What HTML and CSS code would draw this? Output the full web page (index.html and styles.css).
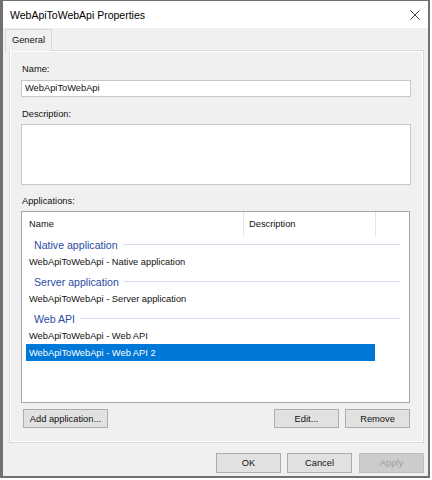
FILE: index.html
```html
<!DOCTYPE html>
<html>
<head>
<meta charset="utf-8">
<link rel="stylesheet" href="styles.css">
</head>
<body>
<div class="window">
  <div class="titlebar">
    <span class="title">WebApiToWebApi Properties</span>
    <svg class="close" width="10" height="10" viewBox="0 0 10 10"><path d="M0.5 0.5 L9.5 9.5 M9.5 0.5 L0.5 9.5" stroke="#404040" stroke-width="1" fill="none"/></svg>
  </div>
  <div class="tabs"><div class="tab">General</div></div>
  <div class="panel">
    <div class="label">Name:</div>
    <div class="input">WebApiToWebApi</div>
    <div class="label gap11">Description:</div>
    <div class="textarea"></div>
    <div class="label gap10">Applications:</div>
    <div class="listview">
      <div class="lv-header">
        <div class="col col-name">Name</div>
        <div class="col col-desc">Description</div>
      </div>
      <div class="group first">Native application</div>
      <div class="item">WebApiToWebApi - Native application</div>
      <div class="group">Server application</div>
      <div class="item">WebApiToWebApi - Server application</div>
      <div class="group">Web API</div>
      <div class="item">WebApiToWebApi - Web API</div>
      <div class="item selected">WebApiToWebApi - Web API 2</div>
    </div>
    <div class="panel-buttons">
      <button class="btn btn-add">Add application...</button>
      <div class="right-buttons">
        <button class="btn">Edit...</button>
        <button class="btn">Remove</button>
      </div>
    </div>
  </div>
  <div class="footer">
    <button class="btn btn-foot">OK</button>
    <button class="btn btn-foot">Cancel</button>
    <button class="btn btn-foot disabled">Apply</button>
  </div>
</div>
</body>
</html>
```
FILE: styles.css
```css
* { box-sizing: border-box; }
html, body { margin: 0; padding: 0; background: #ffffff; }
body {
  font-family: "Liberation Sans", Arial, sans-serif;
  font-size: 9.3px;
  color: #111;
}
.window {
  width: 430px;
  height: 478px;
  border-style: solid;
  border-color: #707070;
  border-width: 1px 2px 2px 3px;
  background: #f0f0f0;
  display: flex;
  flex-direction: column;
}
.titlebar {
  height: 27px;
  flex: none;
  background: #ffffff;
  display: flex;
  align-items: center;
  justify-content: space-between;
  padding: 0 8px 0 7px;
}
.title { font-size: 10.5px; color: #000; }
.close { display: block; }
.tabs {
  height: 23px;
  flex: none;
  display: flex;
  align-items: flex-end;
  padding-left: 2px;
  margin-bottom: -1px;
  position: relative;
  z-index: 1;
}
.tab {
  width: 47px;
  height: 22px;
  border: 1px solid #d9d9d9;
  border-bottom: none;
  background: #f0f0f0;
  display: flex;
  align-items: center;
  justify-content: center;
  padding-bottom: 1px;
}
.panel {
  height: 393px;
  flex: none;
  margin: 0 4px 0 6px;
  border: 1px solid #d9d9d9;
  box-shadow: inset 1px 1px 0 #ffffff, inset -1px -1px 0 #ffffff;
  background: #f0f0f0;
  padding: 12px 12px 0 11px;
  display: flex;
  flex-direction: column;
}
.label {
  height: 12px;
  line-height: 12px;
  margin-bottom: 5px;
  padding-left: 1px;
}
.label.gap11 { margin-top: 11px; margin-bottom: 4px; }
.label.gap10 { margin-top: 10px; margin-bottom: 4px; }
.input {
  height: 17px;
  border: 1px solid #c8c8c8;
  background: #fff;
  line-height: 15px;
  padding-left: 3px;
}
.textarea {
  height: 61px;
  border: 1px solid #c8c8c8;
  background: #fff;
}
.listview {
  height: 192px;
  margin-right: 1px;
  border: 1px solid #a5a5a5;
  background: #fff;
}
.lv-header {
  height: 24px;
  display: flex;
}
.col {
  height: 24px;
  line-height: 24px;
}
.col-name {
  width: 222px;
  padding-left: 7px;
  border-right: 1px solid #e5e5e5;
}
.col-desc {
  width: 132px;
  padding-left: 5px;
  border-right: 1px solid #e5e5e5;
}
.group {
  height: 17px;
  margin-top: 3px;
  display: flex;
  align-items: center;
  padding: 0 9px 0 12px;
  color: #2c4ba3;
  font-size: 10.6px;
}
.group.first { margin-top: 0; }
.group::after {
  content: "";
  flex: 1;
  height: 1px;
  background: #d3ddeb;
  margin-left: 5px;
}
.item {
  height: 17px;
  line-height: 17px;
  padding: 1px 0 0 7px;
}
.item.selected {
  margin-left: 4px;
  width: 349px;
  padding-left: 3px;
  background: #0078d7;
  color: #fff;
}
.panel-buttons {
  margin-top: 6px;
  display: flex;
  padding-left: 2px;
}
.right-buttons {
  margin-left: auto;
  margin-right: 1px;
  display: flex;
  gap: 6px;
}
.btn {
  font-family: "Liberation Sans", Arial, sans-serif;
  font-size: 9.3px;
  color: #111;
  height: 19px;
  width: 65px;
  background: #e1e1e1;
  border: 1px solid #adadad;
  padding: 0;
  margin: 0;
}
.btn-add { width: 85px; }
.footer {
  display: flex;
  justify-content: flex-end;
  gap: 6px;
  padding: 10px 4px 0 0;
}
.btn-foot { height: 20px; }
.btn-foot.disabled {
  margin-left: 1px;
  background: #cccccc;
  border-color: #bfbfbf;
  color: #a0a0a0;
}
```
